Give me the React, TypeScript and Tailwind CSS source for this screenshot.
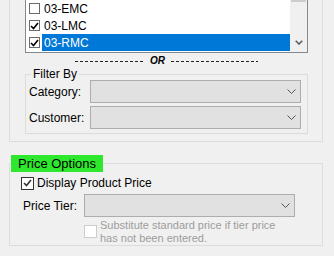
function Chevron() {
  return (
    <svg width="9" height="5" viewBox="0 0 9 5" className="block">
      <polyline points="0.5,0.5 4.5,4.5 8.5,0.5" fill="none" stroke="#555" strokeWidth="1" />
    </svg>
  );
}

function Combo() {
  return (
    <div className="flex h-[23px] w-[211px] items-center justify-end border border-[#adadad] bg-[#e1e1e1] pr-[4px]">
      <Chevron />
    </div>
  );
}

function Check({ color }: { color: string }) {
  return (
    <svg width="9" height="8" viewBox="0 0 9 8" className="block">
      <polyline points="1,4 3.5,6.5 8,1" fill="none" stroke={color} strokeWidth="1.6" />
    </svg>
  );
}

const rows = [
  { code: "03-EMC", checked: false, selected: false },
  { code: "03-LMC", checked: true, selected: false },
  { code: "03-RMC", checked: true, selected: true },
];

export default function App() {
  return (
    <div className="h-[256px] w-[334px] overflow-hidden bg-[#f0f0f0] font-['Liberation_Sans',Arial,sans-serif] text-[12px] text-black">
      {/* Outer group (scrolled top) */}
      <div className="ml-[9px] h-[142px] w-[314px] border-x border-b border-[#dcdcdc] pl-[15px]">
        {/* Listbox */}
        <div className="flex h-[53px] w-[283px] border-x border-b border-[#828790]">
          <div className="flex flex-1 flex-col bg-white">
            {rows.map((r) => (
              <div key={r.code} className="flex h-[17px] items-center pl-[3px]">
                <div className="flex h-[11px] w-[11px] items-center justify-center border border-[#6b6b6b] bg-white">
                  {r.checked && <Check color="#000" />}
                </div>
                <div
                  className={
                    r.selected
                      ? "ml-[2px] flex h-[17px] flex-1 items-center bg-[#0078d7] px-[2px] text-white"
                      : "ml-[2px] flex h-[17px] flex-1 items-center px-[2px] text-[#000]"
                  }
                >
                  {r.code}
                </div>
              </div>
            ))}
          </div>
          <div className="flex w-[17px] flex-col bg-[#f0f0f0]">
            <div className="mx-[1px] h-[2px] bg-[#cdcdcd]" />
            <div className="flex-1" />
            <div className="flex h-[17px] items-center justify-center pb-[2px]">
              <svg width="8" height="5" viewBox="0 0 8 5" className="block">
                <polyline points="0.7,0.7 4,4 7.3,0.7" fill="none" stroke="#606060" strokeWidth="1.6" />
              </svg>
            </div>
          </div>
        </div>

        {/* OR divider */}
        <div className="mt-[1px] flex h-[14px] items-center">
          <div className="ml-[50px] h-px w-[70px] bg-[repeating-linear-gradient(90deg,#222_0px,#222_3px,transparent_3px,transparent_5px)]" />
          <span className="ml-[5px] text-[10px] font-bold italic leading-none">OR</span>
          <div className="ml-[6px] h-px w-[87px] bg-[repeating-linear-gradient(90deg,#222_0px,#222_3px,transparent_3px,transparent_5px)]" />
        </div>

        {/* Filter By */}
        <fieldset className="w-[283px] border border-[#dcdcdc] pb-[4px] pl-[3px]">
          <legend className="ml-[2px] px-[2px] leading-[12px]">Filter By</legend>
          <div className="flex flex-col gap-[3px]">
            <div className="flex h-[23px] items-center">
              <span className="w-[61px]">Category:</span>
              <Combo />
            </div>
            <div className="flex h-[23px] items-center">
              <span className="w-[61px]">Customer:</span>
              <Combo />
            </div>
          </div>
        </fieldset>
      </div>

      {/* Price Options */}
      <fieldset className="ml-[9px] mt-[13px] w-[314px] border border-[#dcdcdc]">
        <legend className="ml-[1px] h-[17px] bg-[#2ee82e] px-[7px] text-[13px] leading-[17px]">Price Options</legend>
        <div className="mt-[3px] flex h-[16px] items-center pl-[11px]">
          <div className="flex h-[13px] w-[13px] items-center justify-center border border-[#333] bg-white">
            <Check color="#333" />
          </div>
          <span className="ml-[3px]">Display Product Price</span>
        </div>
        <div className="mt-[3px] flex h-[23px] items-center pl-[13px]">
          <span className="w-[61px]">Price Tier:</span>
          <Combo />
        </div>
        <div className="mt-[2px] flex items-start pl-[74px]">
          <div className="mt-[6px] h-[13px] w-[13px] border border-[#cccccc] bg-white" />
          <p className="ml-[3px] w-[185px] text-[11px] leading-[13px] text-[#9d9d9d]">
            Substitute standard price if tier price has not been entered.
          </p>
        </div>
      </fieldset>
    </div>
  );
}
